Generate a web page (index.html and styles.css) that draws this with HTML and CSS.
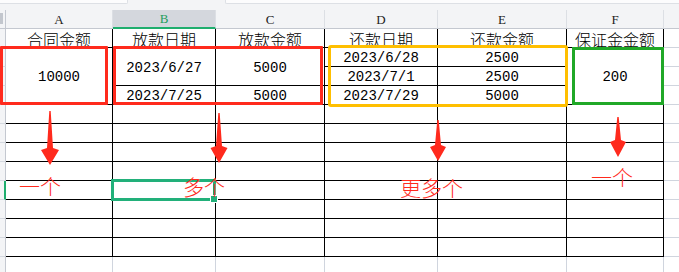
FILE: index.html
```html
<!DOCTYPE html>
<html lang="zh-CN">
<head>
<meta charset="utf-8">
<title>sheet</title>
<link rel="stylesheet" href="styles.css">
</head>
<body>
<div class="sheet">
  <div class="strip"><div class="fx fx-a"></div><div class="fx-gap"></div><div class="fx fx-b"></div></div>

  <div class="ch corner"><span class="tri"></span></div>
  <div class="ch">A</div>
  <div class="ch active">B</div>
  <div class="ch">C</div>
  <div class="ch">D</div>
  <div class="ch">E</div>
  <div class="ch">F</div>
  <div class="ch last"></div>

  <!-- row 1 -->
  <div class="rh"></div>
  <div class="c hd">合同金额</div>
  <div class="c hd">放款日期</div>
  <div class="c hd">放款金额</div>
  <div class="c hd">还款日期</div>
  <div class="c hd">还款金额</div>
  <div class="c hd">保证金金额</div>
  <div class="g"></div>

  <!-- row 2 -->
  <div class="rh"></div>
  <div class="c num span3">10000</div>
  <div class="c num span2">2023/6/27</div>
  <div class="c num span2">5000</div>
  <div class="c num">2023/6/28</div>
  <div class="c num">2500</div>
  <div class="c num span3">200</div>
  <div class="g"></div>

  <!-- row 3 -->
  <div class="rh"></div>
  <div class="c num">2023/7/1</div>
  <div class="c num">2500</div>
  <div class="g"></div>

  <!-- row 4 -->
  <div class="rh"></div>
  <div class="c num">2023/7/25</div>
  <div class="c num">5000</div>
  <div class="c num">2023/7/29</div>
  <div class="c num">5000</div>
  <div class="g"></div>

  <!-- row 5 -->
  <div class="rh"></div><div class="c"></div><div class="c"></div><div class="c"></div><div class="c"></div><div class="c"></div><div class="c"></div><div class="g"></div>
  <!-- row 6 -->
  <div class="rh"></div><div class="c"></div><div class="c"></div><div class="c"></div><div class="c"></div><div class="c"></div><div class="c"></div><div class="g"></div>
  <!-- row 7 -->
  <div class="rh"></div><div class="c"></div><div class="c"></div><div class="c"></div><div class="c"></div><div class="c"></div><div class="c"></div><div class="g"></div>
  <!-- row 8 -->
  <div class="rh"></div><div class="c"></div><div class="c"></div><div class="c"></div><div class="c"></div><div class="c"></div><div class="c"></div><div class="g"></div>
  <!-- row 9 (active) -->
  <div class="rh rh-active"></div><div class="c"></div><div class="c sel"></div><div class="c"></div><div class="c"></div><div class="c"></div><div class="c"></div><div class="g"></div>
  <!-- row 10 -->
  <div class="rh"></div><div class="c"></div><div class="c"></div><div class="c"></div><div class="c"></div><div class="c"></div><div class="c"></div><div class="g"></div>
  <!-- row 11 -->
  <div class="rh"></div><div class="c"></div><div class="c"></div><div class="c"></div><div class="c"></div><div class="c"></div><div class="c"></div><div class="g"></div>
  <!-- row 12 -->
  <div class="rh"></div><div class="c"></div><div class="c"></div><div class="c"></div><div class="c"></div><div class="c"></div><div class="c"></div><div class="g"></div>
  <!-- row 13 (outside table) -->
  <div class="rh"></div><div class="b"></div><div class="b"></div><div class="b"></div><div class="b"></div><div class="b"></div><div class="b"></div><div class="g"></div>

  <!-- highlight boxes -->
  <div class="box box-red box-a"></div>
  <div class="box box-red box-bc"></div>
  <div class="box box-yellow"></div>
  <div class="box box-green"></div>

  <!-- arrows -->
  <svg class="arrows" width="679" height="272" viewBox="0 0 679 272">
    <path d="M49.3 111 L50.7 111 L53 148 L59 150 L50 165 L41 150 L47 148 Z"/>
    <path d="M218.3 113 L219.7 113 L222 146 L227.5 148 L219 163 L210.5 148 L216 146 Z"/>
    <path d="M437.3 120 L438.7 120 L441 145 L446 147 L438 161 L430 147 L435 145 Z"/>
    <path d="M617.3 117 L618.7 117 L621 140 L626 142 L618 157 L610 142 L615 140 Z"/>
  </svg>

  <!-- floating labels -->
  <div class="lbl lbl-1">一个</div>
  <div class="lbl lbl-2">多个</div>
  <div class="lbl lbl-3">更多个</div>
  <div class="lbl lbl-4">一个</div>
</div>
</body>
</html>
```

FILE: styles.css
```css
* { box-sizing: border-box; margin: 0; padding: 0; }

html, body {
  width: 679px;
  height: 272px;
  overflow: hidden;
  background: #ffffff;
}

body {
  font-family: "Noto Sans CJK SC", "Noto Sans", sans-serif;
  color: #000;
}

.sheet {
  position: relative;
  display: grid;
  grid-template-columns: 6px 107px 103px 109px 113px 129px 97px 16px;
  grid-template-rows: 10px 19px repeat(12, 19px) 16px;
  width: 680px;
}

/* formula bar remnants */
.strip {
  grid-column: 1 / -1;
  display: flex;
  align-items: flex-start;
  background: #f3f4f6;
}
.fx {
  height: 4px;
  background: #fcfcfd;
  border-bottom: 1px solid #dde0e5;
}
.fx-a { width: 128px; border-right: 1px solid #dde0e5; border-bottom-right-radius: 2px; }
.fx-gap { width: 97px; }
.fx-b { flex: 1; border-left: 1px solid #dde0e5; border-bottom-left-radius: 2px; }

/* column headers */
.ch {
  background: #f3f4f6;
  border-right: 1px solid #dcdfe4;
  border-bottom: 1px solid #c4c8d0;
  display: flex;
  align-items: center;
  justify-content: center;
  font-family: "Liberation Serif", "DejaVu Serif", serif;
  font-size: 13px;
  color: #222;
  padding-top: 1px;
}
.ch.active {
  background: #d4d7dd;
  color: #1f9e5e;
  border-bottom: 2px solid #1fae6e;
}
.ch.corner { position: relative; border-right: 1px solid #c4c8d0; }
.tri {
  position: absolute;
  left: 0;
  top: 3px;
  width: 3px;
  height: 11px;
  background: #c2c6cd;
}
.ch.last { border-right: none; }

/* row headers */
.rh {
  background: #f3f4f6;
  border-right: 1px solid #c4c8d0;
  border-bottom: 1px solid #d4d8df;
}
.rh-active { border-right: 2px solid #1fae6e; }

/* table cells */
.c {
  border-right: 1px solid #000;
  border-bottom: 1px solid #000;
  display: flex;
  align-items: center;
  justify-content: center;
  white-space: nowrap;
}
.hd {
  font-size: 16px;
  line-height: 16px;
  align-items: flex-end;
  font-weight: 300;
}
.num {
  font-family: "Liberation Mono", "DejaVu Sans Mono", monospace;
  font-size: 14px;
  padding-top: 2px;
}
.span2 { grid-row: span 2; }
.span3 { grid-row: span 3; }

.g { border-bottom: 1px solid #d0d5de; }
.b { border-right: 1px solid #d0d5de; }

/* selected cell */
.sel { position: relative; z-index: 1; }
.sel::after {
  content: "";
  position: absolute;
  left: -2px;
  top: -2px;
  right: -1px;
  bottom: -2px;
  border: 3px solid #22b07a;
}
.sel::before {
  content: "";
  position: absolute;
  right: -3px;
  bottom: -4px;
  width: 6px;
  height: 6px;
  background: #22b07a;
  border: 1px solid #fff;
  z-index: 2;
}

/* highlight boxes */
.box {
  position: absolute;
  border: 3px solid;
  z-index: 3;
}
.box-red { border-color: #ff2a1d; border-radius: 1px; }
.box-a { left: 0; top: 46px; width: 108px; height: 59px; }
.box-bc { left: 113px; top: 46px; width: 210px; height: 59px; }
.box-yellow { left: 328px; top: 45px; width: 240px; height: 62px; border-color: #ffbf00; border-radius: 3px; }
.box-green { left: 572px; top: 47px; width: 92px; height: 58px; border-color: #20a827; }

/* arrows */
.arrows {
  position: absolute;
  left: 0;
  top: 0;
  z-index: 4;
  fill: #ff2a1d;
}

/* floating red labels */
.lbl {
  position: absolute;
  z-index: 5;
  color: #ff2a1d;
  font-size: 21px;
  line-height: 21px;
  font-weight: 300;
  white-space: nowrap;
}
.lbl-1 { left: 19px; top: 175px; }
.lbl-2 { left: 183px; top: 176px; }
.lbl-3 { left: 400px; top: 177px; }
.lbl-4 { left: 591px; top: 166px; }
```
